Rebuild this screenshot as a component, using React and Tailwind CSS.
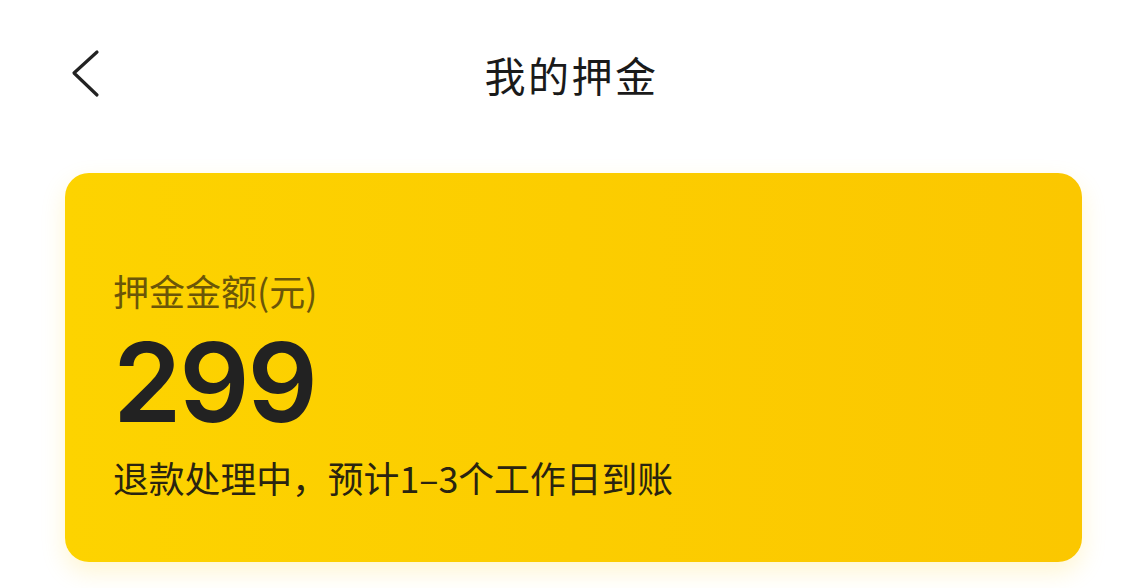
import React from 'react';

const CJK = '"Noto Sans CJK SC", "Noto Sans", sans-serif';

function BackIcon() {
  return (
    <svg width="32" height="50" viewBox="0 0 32 50" fill="none">
      <path d="M26 3 L3 24 L26 46" stroke="#222" strokeWidth="3.2" strokeLinecap="round" strokeLinejoin="round" />
    </svg>
  );
}

export default function App() {
  return (
    <div className="w-[1143px] h-[588px] bg-white overflow-hidden" style={{ fontFamily: CJK }}>
      {/* Header */}
      <div className="relative h-[150px] flex items-center justify-center">
        <button className="absolute left-[71px] top-[49px]">
          <BackIcon />
        </button>
        <h1 className="text-[41px] leading-none text-[#1a1a1a] tracking-[0.06em] -mt-[2px]">我的押金</h1>
      </div>

      {/* Deposit card */}
      <div className="ml-[65px] w-[1017px] mt-[23px] h-[389px] rounded-[24px] bg-gradient-to-r from-[#FDD300] to-[#FBC700] shadow-[0_10px_24px_rgba(253,205,0,0.18)] pl-[48px] pt-[99px]">
        <div className="text-[36px] leading-none text-[#6b5608]">押金金额(元)</div>
        <div
          className="mt-[19px] text-[110px] leading-none font-semibold text-[#222] tracking-[-0.02em]"
          style={{ fontFamily: 'Inter, "Liberation Sans", Arial, sans-serif' }}
        >
          299
        </div>
        <div className="mt-[23px] text-[35.8px] leading-none text-[#2a2410]">退款处理中，预计1–3个工作日到账</div>
      </div>
    </div>
  );
}
